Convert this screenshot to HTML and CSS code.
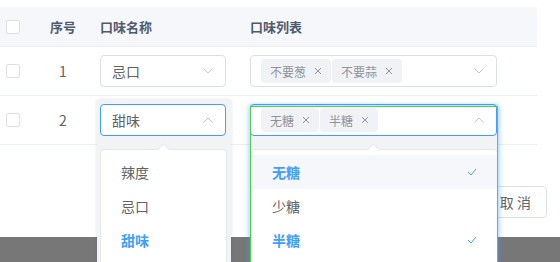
FILE: index.html
```html
<!DOCTYPE html>
<html lang="zh-CN">
<head>
    <meta charset="UTF-8">
    <title>口味配置</title>
    <link rel="stylesheet" href="styles.css">
</head>
<body>
    <div class="page">
        <!-- 口味表格 -->
        <div class="flavor-table">
            <div class="table-row table-head">
                <div class="cell cell-check"><span class="checkbox"></span></div>
                <div class="cell cell-index">序号</div>
                <div class="cell cell-name">口味名称</div>
                <div class="cell cell-list">口味列表</div>
            </div>
            <div class="table-row">
                <div class="cell cell-check"><span class="checkbox"></span></div>
                <div class="cell cell-index">1</div>
                <div class="cell cell-name">
                    <div class="select">
                        <span class="select-value">忌口</span>
                        <svg class="select-arrow" width="10" height="6" viewBox="0 0 10 6"><polyline points="0.5,0.5 5,5 9.5,0.5" fill="none" stroke="#c0c4cc" stroke-width="1"/></svg>
                    </div>
                </div>
                <div class="cell cell-list">
                    <div class="select select-multi">
                        <div class="tags">
                            <span class="tag">不要葱<svg class="tag-close" width="8" height="8" viewBox="0 0 8 8"><path d="M1 1L7 7M7 1L1 7" stroke="#909399" stroke-width="1"/></svg></span>
                            <span class="tag">不要蒜<svg class="tag-close" width="8" height="8" viewBox="0 0 8 8"><path d="M1 1L7 7M7 1L1 7" stroke="#909399" stroke-width="1"/></svg></span>
                        </div>
                        <svg class="select-arrow" width="10" height="6" viewBox="0 0 10 6"><polyline points="0.5,0.5 5,5 9.5,0.5" fill="none" stroke="#c0c4cc" stroke-width="1"/></svg>
                    </div>
                </div>
            </div>
            <div class="table-row">
                <div class="cell cell-check"><span class="checkbox"></span></div>
                <div class="cell cell-index">2</div>
                <div class="cell cell-name">
                    <div class="select is-focus">
                        <span class="select-value">甜味</span>
                        <svg class="select-arrow" width="10" height="6" viewBox="0 0 10 6"><polyline points="0.5,5.5 5,1 9.5,5.5" fill="none" stroke="#c0c4cc" stroke-width="1"/></svg>
                    </div>
                </div>
                <div class="cell cell-list">
                    <div class="select select-multi is-focus">
                        <div class="tags">
                            <span class="tag">无糖<svg class="tag-close" width="8" height="8" viewBox="0 0 8 8"><path d="M1 1L7 7M7 1L1 7" stroke="#909399" stroke-width="1"/></svg></span>
                            <span class="tag">半糖<svg class="tag-close" width="8" height="8" viewBox="0 0 8 8"><path d="M1 1L7 7M7 1L1 7" stroke="#909399" stroke-width="1"/></svg></span>
                        </div>
                        <svg class="select-arrow" width="10" height="6" viewBox="0 0 10 6"><polyline points="0.5,5.5 5,1 9.5,5.5" fill="none" stroke="#c0c4cc" stroke-width="1"/></svg>
                    </div>
                </div>
            </div>
        </div>

        <div class="dialog-footer">
            <button class="btn">取 消</button>
        </div>
        <div class="mask-strip"></div>

        <!-- 单选下拉 -->
        <div class="popper-bg popper-bg-name"></div>
        <div class="dropdown dropdown-name">
            <div class="dropdown-item">辣度</div>
            <div class="dropdown-item">忌口</div>
            <div class="dropdown-item selected">甜味</div>
        </div>
        <div class="popper-arrow arrow-name"></div>

        <!-- 多选下拉 -->
        <div class="popper-bg popper-bg-list"></div>
        <div class="dropdown dropdown-list">
            <div class="dropdown-item selected hover">无糖<svg class="check" width="10" height="8" viewBox="0 0 10 8"><polyline points="1,4 4,7 9,1" fill="none" stroke="#409eff" stroke-width="1"/></svg></div>
            <div class="dropdown-item">少糖</div>
            <div class="dropdown-item selected">半糖<svg class="check" width="10" height="8" viewBox="0 0 10 8"><polyline points="1,4 4,7 9,1" fill="none" stroke="#409eff" stroke-width="1"/></svg></div>
        </div>
        <div class="popper-arrow arrow-list"></div>
        <div class="focus-frame"></div>
    </div>
</body>
</html>
```

FILE: styles.css
```css
html, body {
    margin: 0;
    padding: 0;
    height: 262px;
    overflow: hidden;
    background: #fff;
    font-family: "Noto Sans CJK SC", "Noto Sans", sans-serif;
    color: #606266;
}

.page {
    position: relative;
    height: 262px;
    overflow: hidden;
}

/* 表格 */
.flavor-table {
    width: 537px;
    padding-top: 7px;
}

.table-row {
    display: grid;
    grid-template-columns: 38px 50px 150px 299px;
    height: 48px;
    border-bottom: 1px solid #ebeef5;
    align-items: center;
    font-size: 14px;
}

.table-head {
    height: 39px;
    background: #f5f7fa;
    color: #515a6e;
    font-weight: 600;
    font-size: 13px;
}

.cell-check {
    padding-left: 6px;
    display: flex;
    align-items: center;
}

.cell-index {
    text-align: center;
}

.cell-name,
.cell-list {
    padding-left: 12px;
}

.checkbox {
    display: block;
    width: 12px;
    height: 12px;
    border: 1px solid #dcdfe6;
    border-radius: 2px;
    background: #fff;
}

/* 选择框 */
.select {
    display: flex;
    align-items: center;
    justify-content: space-between;
    box-sizing: border-box;
    width: 126px;
    height: 32px;
    padding: 0 12px 0 11px;
    border: 1px solid #dcdfe6;
    border-radius: 4px;
    background: #fff;
    font-size: 14px;
}

.select-multi {
    width: 247px;
    padding-left: 10px;
    padding-right: 12px;
}

.select.is-focus {
    border-color: #409eff;
    position: relative;
    z-index: 2;
}

.select-arrow {
    display: block;
}

.tags {
    display: flex;
    gap: 1px;
}

.tag {
    display: flex;
    align-items: center;
    height: 24px;
    padding: 0 9px;
    border-radius: 4px;
    background: #f0f2f5;
    color: #909399;
    font-size: 12px;
}

.tag-close {
    display: block;
    margin-left: 8px;
}

/* 底部 */
.dialog-footer {
    display: flex;
    justify-content: flex-end;
    padding: 41px 13px 19px 0;
}

.btn {
    height: 32px;
    padding: 0 15px;
    border: 1px solid #dcdfe6;
    border-radius: 4px;
    background: #fff;
    color: #606266;
    font-family: inherit;
    font-size: 14px;
}

.mask-strip {
    height: 25px;
    background: #777;
}

/* 下拉弹层 */
.popper-bg {
    position: absolute;
    background: #f2f3f5;
    z-index: 1;
}

.popper-bg-name {
    left: 97px;
    top: 100px;
    width: 134px;
    height: 162px;
    box-shadow: 0 0 4px rgba(0, 0, 0, 0.12);
}

.popper-bg-list {
    left: 250px;
    top: 104px;
    width: 248px;
    height: 158px;
}

.dropdown {
    position: absolute;
    top: 149px;
    height: 113px;
    box-sizing: border-box;
    padding-top: 5px;
    border: 1px solid #e4e7ed;
    border-bottom: none;
    border-radius: 4px 4px 0 0;
    background: #fff;
    z-index: 3;
}

.dropdown-name {
    left: 100px;
    width: 127px;
}

.dropdown-list {
    left: 251px;
    width: 246px;
    border-right: none;
}

.dropdown-item {
    display: flex;
    align-items: center;
    justify-content: space-between;
    height: 34px;
    padding: 0 20px;
    font-size: 14px;
    color: #606266;
}

.dropdown-item.selected {
    color: #409eff;
    font-weight: 700;
}

.dropdown-item.hover {
    background: #f5f7fa;
}

.check {
    display: block;
}

.popper-arrow {
    position: absolute;
    top: 145px;
    width: 8px;
    height: 8px;
    background: #fff;
    border-top: 1px solid #e4e7ed;
    border-left: 1px solid #e4e7ed;
    transform: rotate(45deg);
    z-index: 4;
}

.arrow-name {
    left: 159px;
}

.arrow-list {
    left: 369px;
}

.focus-frame {
    position: absolute;
    left: 250px;
    top: 106px;
    width: 245px;
    height: 156px;
    box-sizing: border-box;
    border: 1.5px solid #4cd24c;
    border-bottom: none;
    width: 248px;
    box-shadow: 0 0 5px 1px rgba(64, 158, 255, 0.5);
    pointer-events: none;
    z-index: 5;
}
```
